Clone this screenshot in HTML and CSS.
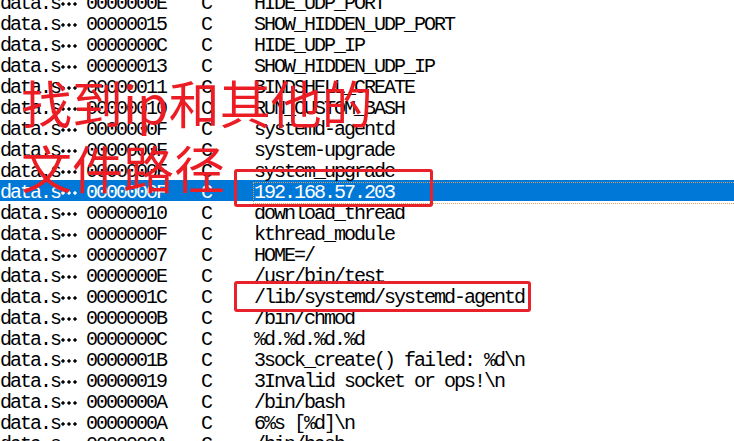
FILE: index.html
```html
<!DOCTYPE html>
<html>
<head>
<meta charset="utf-8">
<link rel="stylesheet" href="styles.css">
</head>
<body>
<div class="list">
  <div class="row"><span class="c1">data.s<span class="ell"></span></span><span>0000000E</span><span>C</span><span>HIDE_UDP_PORT</span></div>
  <div class="row"><span class="c1">data.s<span class="ell"></span></span><span>00000015</span><span>C</span><span>SHOW_HIDDEN_UDP_PORT</span></div>
  <div class="row"><span class="c1">data.s<span class="ell"></span></span><span>0000000C</span><span>C</span><span>HIDE_UDP_IP</span></div>
  <div class="row"><span class="c1">data.s<span class="ell"></span></span><span>00000013</span><span>C</span><span>SHOW_HIDDEN_UDP_IP</span></div>
  <div class="row"><span class="c1">data.s<span class="ell"></span></span><span>00000011</span><span>C</span><span>BINDSHELL_CREATE</span></div>
  <div class="row"><span class="c1">data.s<span class="ell"></span></span><span>00000010</span><span>C</span><span>RUN_CUSTOM_BASH</span></div>
  <div class="row"><span class="c1">data.s<span class="ell"></span></span><span>0000000F</span><span>C</span><span>systemd-agentd</span></div>
  <div class="row"><span class="c1">data.s<span class="ell"></span></span><span>0000000F</span><span>C</span><span>system-upgrade</span></div>
  <div class="row"><span class="c1">data.s<span class="ell"></span></span><span>0000000F</span><span>C</span><span>system_upgrade</span></div>
  <div class="row sel"><span class="c1">data.s<span class="ell"></span></span><span>0000000F</span><span>C</span><span class="focus">192.168.57.203</span></div>
  <div class="row"><span class="c1">data.s<span class="ell"></span></span><span>00000010</span><span>C</span><span>download_thread</span></div>
  <div class="row"><span class="c1">data.s<span class="ell"></span></span><span>0000000F</span><span>C</span><span>kthread_module</span></div>
  <div class="row"><span class="c1">data.s<span class="ell"></span></span><span>00000007</span><span>C</span><span>HOME=/</span></div>
  <div class="row"><span class="c1">data.s<span class="ell"></span></span><span>0000000E</span><span>C</span><span>/usr/bin/test</span></div>
  <div class="row"><span class="c1">data.s<span class="ell"></span></span><span>0000001C</span><span>C</span><span>/lib/systemd/systemd-agentd</span></div>
  <div class="row"><span class="c1">data.s<span class="ell"></span></span><span>0000000B</span><span>C</span><span>/bin/chmod</span></div>
  <div class="row"><span class="c1">data.s<span class="ell"></span></span><span>0000000C</span><span>C</span><span>%d.%d.%d.%d</span></div>
  <div class="row"><span class="c1">data.s<span class="ell"></span></span><span>0000001B</span><span>C</span><span>3sock_create() failed: %d\n</span></div>
  <div class="row"><span class="c1">data.s<span class="ell"></span></span><span>00000019</span><span>C</span><span>3Invalid socket or ops!\n</span></div>
  <div class="row"><span class="c1">data.s<span class="ell"></span></span><span>0000000A</span><span>C</span><span>/bin/bash</span></div>
  <div class="row"><span class="c1">data.s<span class="ell"></span></span><span>0000000A</span><span>C</span><span>6%s [%d]\n</span></div>
  <div class="row"><span class="c1">data.s<span class="ell"></span></span><span>0000000A</span><span>C</span><span>/bin/bash</span></div>
</div>
<div class="note">
  <div>找到ip和其他的</div>
  <div>文件路径</div>
</div>
<div class="box box-ip"></div>
<div class="box box-path"></div>
</body>
</html>
```
FILE: styles.css
```css
html, body {
  margin: 0;
  padding: 0;
  background: #ffffff;
  overflow: hidden;
  height: 441px;
}

body {
  position: relative;
  font-family: "Liberation Mono", monospace;
  font-size: 20px;
  letter-spacing: -2px;
  color: #000000;
}

.list {
  margin-top: -9px;
}

.row {
  display: grid;
  grid-template-columns: 86px 115px 53px 1fr;
  height: 21px;
  line-height: 25px;
  white-space: nowrap;
}

.row.sel {
  background: #0078d7;
  color: #ffffff;
}

.ell {
  display: inline-block;
  width: 18px;
  height: 4px;
  margin-left: 0;
  vertical-align: 3px;
  background: radial-gradient(circle, currentColor 1.4px, transparent 1.9px) 0 0 / 6px 4px repeat-x;
}

.focus {
  position: relative;
}

.focus::before {
  content: "";
  position: absolute;
  left: -1px;
  right: -4px;
  top: 2px;
  bottom: 1px;
  border: 1px dotted #d8a25c;
}

.note {
  position: absolute;
  left: 21px;
  top: 70px;
  font-family: "Noto Sans CJK SC", sans-serif;
  font-size: 51px;
  line-height: 65px;
  letter-spacing: 0;
  color: #ec1c24;
  white-space: nowrap;
}

.box {
  position: absolute;
  box-sizing: border-box;
  border: 3px solid #e8212b;
  border-radius: 3px;
}

.box-ip {
  left: 234px;
  top: 169px;
  width: 199px;
  height: 38px;
}

.box-path {
  left: 234px;
  top: 281px;
  width: 297px;
  height: 31px;
}
```
